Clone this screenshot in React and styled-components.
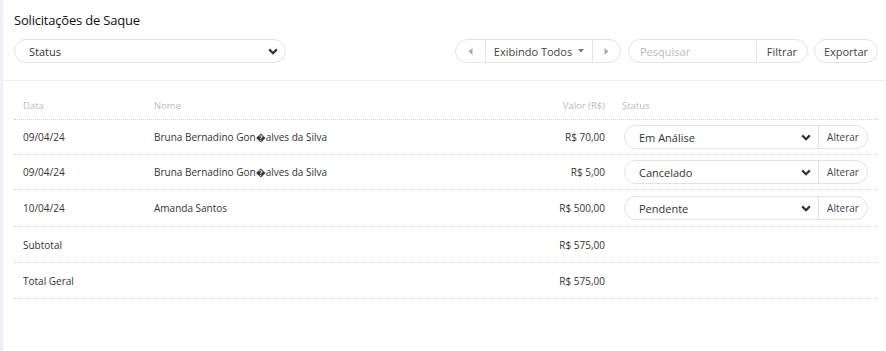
import React from "react";
import styled, { createGlobalStyle } from "styled-components";

const Global = createGlobalStyle`
  html, body { margin: 0; padding: 0; background: #eef2f6; }
  body { font-family: "Open Sans", "Noto Sans", Arial, sans-serif; color: #333; }
  * { box-sizing: border-box; }
`;

const Page = styled.div`
  padding-left: 3px;
  min-height: 351px;
`;

const Panel = styled.div`
  background: #fff;
  min-height: 351px;
`;

const Header = styled.div`
  padding: 10px 8px 17px 11px;
  border-bottom: 1px solid #f0f0f0;
`;

const Title = styled.h1`
  margin: 0 0 9px 0;
  font-size: 13px;
  font-weight: 500;
  line-height: 20px;
  color: #111;
  letter-spacing: -0.2px;
`;

const Toolbar = styled.div`
  display: flex;
  align-items: center;
  height: 24px;
`;

const Spacer = styled.div`
  flex: 1;
`;

const Pill = styled.div`
  display: flex;
  align-items: stretch;
  height: 24px;
  border: 1px solid #e2e2e2;
  border-radius: 12px;
  background: #fff;
  overflow: hidden;
  width: ${(p) => p.$w || "auto"};
  margin-left: ${(p) => p.$ml || "0"};
`;

const SelectBody = styled.div`
  flex: 1;
  display: flex;
  align-items: center;
  justify-content: space-between;
  padding: 0 7px 0 ${(p) => p.$pl || "14px"};
  font-size: ${(p) => p.$fs || "11px"};
  color: #333;
`;

const Segment = styled.div`
  display: flex;
  align-items: center;
  justify-content: center;
  gap: 6px;
  width: ${(p) => p.$w || "auto"};
  font-size: ${(p) => p.$fs || "11px"};
  color: #444;
  border-left: ${(p) => (p.$sep ? "1px solid #e2e2e2" : "none")};
`;

const SearchText = styled.div`
  flex: 1;
  display: flex;
  align-items: center;
  padding-left: 11px;
  font-size: 11px;
  color: #bbb;
`;

const Table = styled.div`
  padding: 11px 8px 0 11px;
`;

const Row = styled.div`
  display: grid;
  grid-template-columns: 131px 1fr 130px 264px;
  align-items: center;
  height: ${(p) => p.$h || "35px"};
  border-bottom: 1px dotted #d4d4d4;
  font-size: ${(p) => (p.$head ? "9.5px" : "10px")};
  color: ${(p) => (p.$head ? "#bcbcbc" : "#333")};
`;

const Cell = styled.div`
  padding: 0 9px 0 ${(p) => p.$pl || "9px"};
  text-align: ${(p) => (p.$right ? "right" : "left")};
  white-space: nowrap;
`;

const StatusCell = styled.div`
  padding: 0 10px;
`;

const Chevron = () => (
  <svg width="10" height="7" viewBox="0 0 10 7">
    <path d="M1.2 1.4 L5 5.2 L8.8 1.4" fill="none" stroke="#333" strokeWidth="2.2" />
  </svg>
);

const Tri = ({ dir }) => (
  <svg width="5" height="7" viewBox="0 0 5 7">
    {dir === "left" ? (
      <path d="M4.5 0 L0.5 3.5 L4.5 7 Z" fill="#aaa" />
    ) : (
      <path d="M0.5 0 L4.5 3.5 L0.5 7 Z" fill="#aaa" />
    )}
  </svg>
);

const Caret = () => (
  <svg width="6" height="4" viewBox="0 0 6 4">
    <path d="M0 0 L6 0 L3 3.5 Z" fill="#777" />
  </svg>
);

const rows = [
  { d: "09/04/24", n: "Bruna Bernadino Gon\uFFFDalves da Silva", v: "R$ 70,00", s: "Em Análise" },
  { d: "09/04/24", n: "Bruna Bernadino Gon\uFFFDalves da Silva", v: "R$ 5,00", s: "Cancelado" },
  { d: "10/04/24", n: "Amanda Santos", v: "R$ 500,00", s: "Pendente" },
];

export default function App() {
  return (
    <Page>
      <Global />
      <Panel>
        <Header>
          <Title>Solicitações de Saque</Title>
          <Toolbar>
            <Pill $w="272px">
              <SelectBody $pl="14px">
                <span>Status</span>
                <Chevron />
              </SelectBody>
            </Pill>
            <Spacer />
            <Pill>
              <Segment $w="29px"><Tri dir="left" /></Segment>
              <Segment $w="107px" $sep>
                Exibindo Todos <Caret />
              </Segment>
              <Segment $w="28px" $sep><Tri dir="right" /></Segment>
            </Pill>
            <Pill $w="180px" $ml="7px">
              <SearchText>Pesquisar</SearchText>
              <Segment $w="51px" $sep>Filtrar</Segment>
            </Pill>
            <Pill $w="64px" $ml="6px">
              <Segment $w="62px">Exportar</Segment>
            </Pill>
          </Toolbar>
        </Header>
        <Table>
          <Row $head $h="28px">
            <Cell>Data</Cell>
            <Cell>Nome</Cell>
            <Cell $right>Valor (R$)</Cell>
            <Cell $pl="8px">Status</Cell>
          </Row>
          {rows.map((r, i) => (
            <Row key={i} $h={i === 2 ? "37px" : "35px"}>
              <Cell>{r.d}</Cell>
              <Cell>{r.n}</Cell>
              <Cell $right>{r.v}</Cell>
              <StatusCell>
                <Pill>
                  <SelectBody $pl="14px" $fs="11px">
                    <span>{r.s}</span>
                    <Chevron />
                  </SelectBody>
                  <Segment $w="49px" $sep $fs="10px">Alterar</Segment>
                </Pill>
              </StatusCell>
            </Row>
          ))}
          <Row $h="36px">
            <Cell>Subtotal</Cell>
            <Cell />
            <Cell $right>R$ 575,00</Cell>
            <Cell />
          </Row>
          <Row $h="36px">
            <Cell>Total Geral</Cell>
            <Cell />
            <Cell $right>R$ 575,00</Cell>
            <Cell />
          </Row>
        </Table>
      </Panel>
    </Page>
  );
}
